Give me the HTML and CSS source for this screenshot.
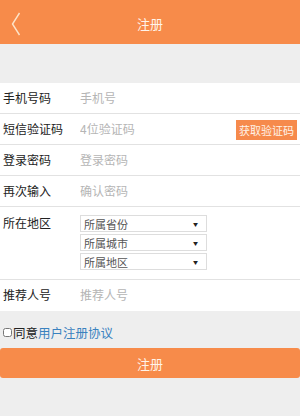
FILE: index.html
```
<!DOCTYPE html>
<html lang="zh-CN">
<head>
    <meta charset="UTF-8">
    <meta name="viewport" content="width=device-width, initial-scale=1.0">
    <title>注册</title>
    <link rel="stylesheet" href="styles.css">
</head>
<body>
    <!-- Top Bar -->
    <div class="topbar">
        <a class="back" href="#">
            <svg width="10" height="24" viewBox="0 0 10 24">
                <polyline points="8.5,1 1.5,12 8.5,23" fill="none" stroke="#fde3c8" stroke-width="1.4"/>
            </svg>
        </a>
        <span class="title">注册</span>
    </div>

    <div class="gap-band"></div>

    <!-- Register Form -->
    <form class="reg-form">
        <div class="row">
            <label>手机号码</label>
            <input type="text" placeholder="手机号">
        </div>
        <div class="row">
            <label>短信验证码</label>
            <input type="text" placeholder="4位验证码">
            <button type="button" class="code-btn">获取验证码</button>
        </div>
        <div class="row">
            <label>登录密码</label>
            <input type="password" placeholder="登录密码">
        </div>
        <div class="row">
            <label>再次输入</label>
            <input type="password" placeholder="确认密码">
        </div>
        <div class="row row-area">
            <label>所在地区</label>
            <div class="selects">
                <div class="select-box"><span>所属省份</span><span class="arrow">▼</span></div>
                <div class="select-box"><span>所属城市</span><span class="arrow">▼</span></div>
                <div class="select-box"><span>所属地区</span><span class="arrow">▼</span></div>
            </div>
        </div>
        <div class="row row-last">
            <label>推荐人号</label>
            <input type="text" placeholder="推荐人号">
        </div>
    </form>

    <!-- Agreement -->
    <div class="agree">
        <input type="checkbox" id="agree">
        <span>同意</span><a href="#">用户注册协议</a>
    </div>

    <button type="button" class="submit-btn">注册</button>
</body>
</html>
```

FILE: styles.css
```
body {
    margin: 0;
    background-color: #eeeeee; /* Page gray */
    font-family: "Noto Sans CJK SC", "Noto Sans", sans-serif;
    color: #222;
}

.topbar {
    height: 44px;
    background-color: #f78b4a; /* Orange header */
    display: flex;
    align-items: center;
    justify-content: center;
    position: relative;
}

.topbar .back {
    position: absolute;
    left: 11px;
    top: 12px;
    display: block;
    line-height: 0;
}

.topbar .title {
    color: #fff4ea;
    font-size: 13px;
    margin-top: 3px;
}

.gap-band {
    height: 39px;
}

.reg-form {
    background-color: #ffffff;
}

.row {
    display: flex;
    align-items: center;
    height: 30px;
    border-bottom: 1px solid #e2e2e2;
}

.row label {
    width: 77px;
    padding-left: 3px;
    padding-bottom: 2px;
    font-size: 12px;
    color: #222;
    flex-shrink: 0;
}

.row input {
    flex: 1;
    min-width: 0;
    border: none;
    outline: none;
    padding: 0 0 2px 0;
    font-family: inherit;
    font-size: 12px;
    background: transparent;
    color: #333;
}

.row input::placeholder {
    color: #b5b5b5;
}

.code-btn {
    background-color: #f68a4c;
    color: #fff3e8;
    border: none;
    font-family: inherit;
    font-size: 11px;
    height: 20px;
    width: 61px;
    padding: 0;
    margin-right: 3px;
    margin-top: 2px;
}

.row-area {
    height: 72px;
    align-items: flex-start;
}

.row-area label {
    margin-top: 7px;
}

.selects {
    display: flex;
    flex-direction: column;
    gap: 2px;
    margin-top: 8px;
}

.select-box {
    width: 114px;
    height: 15px;
    border: 1px solid #dddddd;
    display: flex;
    align-items: center;
    justify-content: space-between;
    font-size: 11px;
    color: #555;
    padding: 0 8px 0 3px;
}

.select-box .arrow {
    font-size: 5px;
    color: #222;
}

.row-last {
    height: 31px;
    border-bottom: none;
}

.agree {
    display: flex;
    align-items: center;
    margin-top: 14px;
    height: 14px;
    font-size: 12.5px;
}

.agree input {
    margin: 0 1px 0 3px;
    width: 9px;
    height: 9px;
}

.agree a {
    color: #3a82bf;
    text-decoration: none;
}

.submit-btn {
    display: block;
    width: 100%;
    height: 30px;
    margin-top: 9px;
    border: none;
    border-radius: 3px;
    background-color: #f78b4a;
    color: #fff3e8;
    font-family: inherit;
    font-size: 13px;
}
```
